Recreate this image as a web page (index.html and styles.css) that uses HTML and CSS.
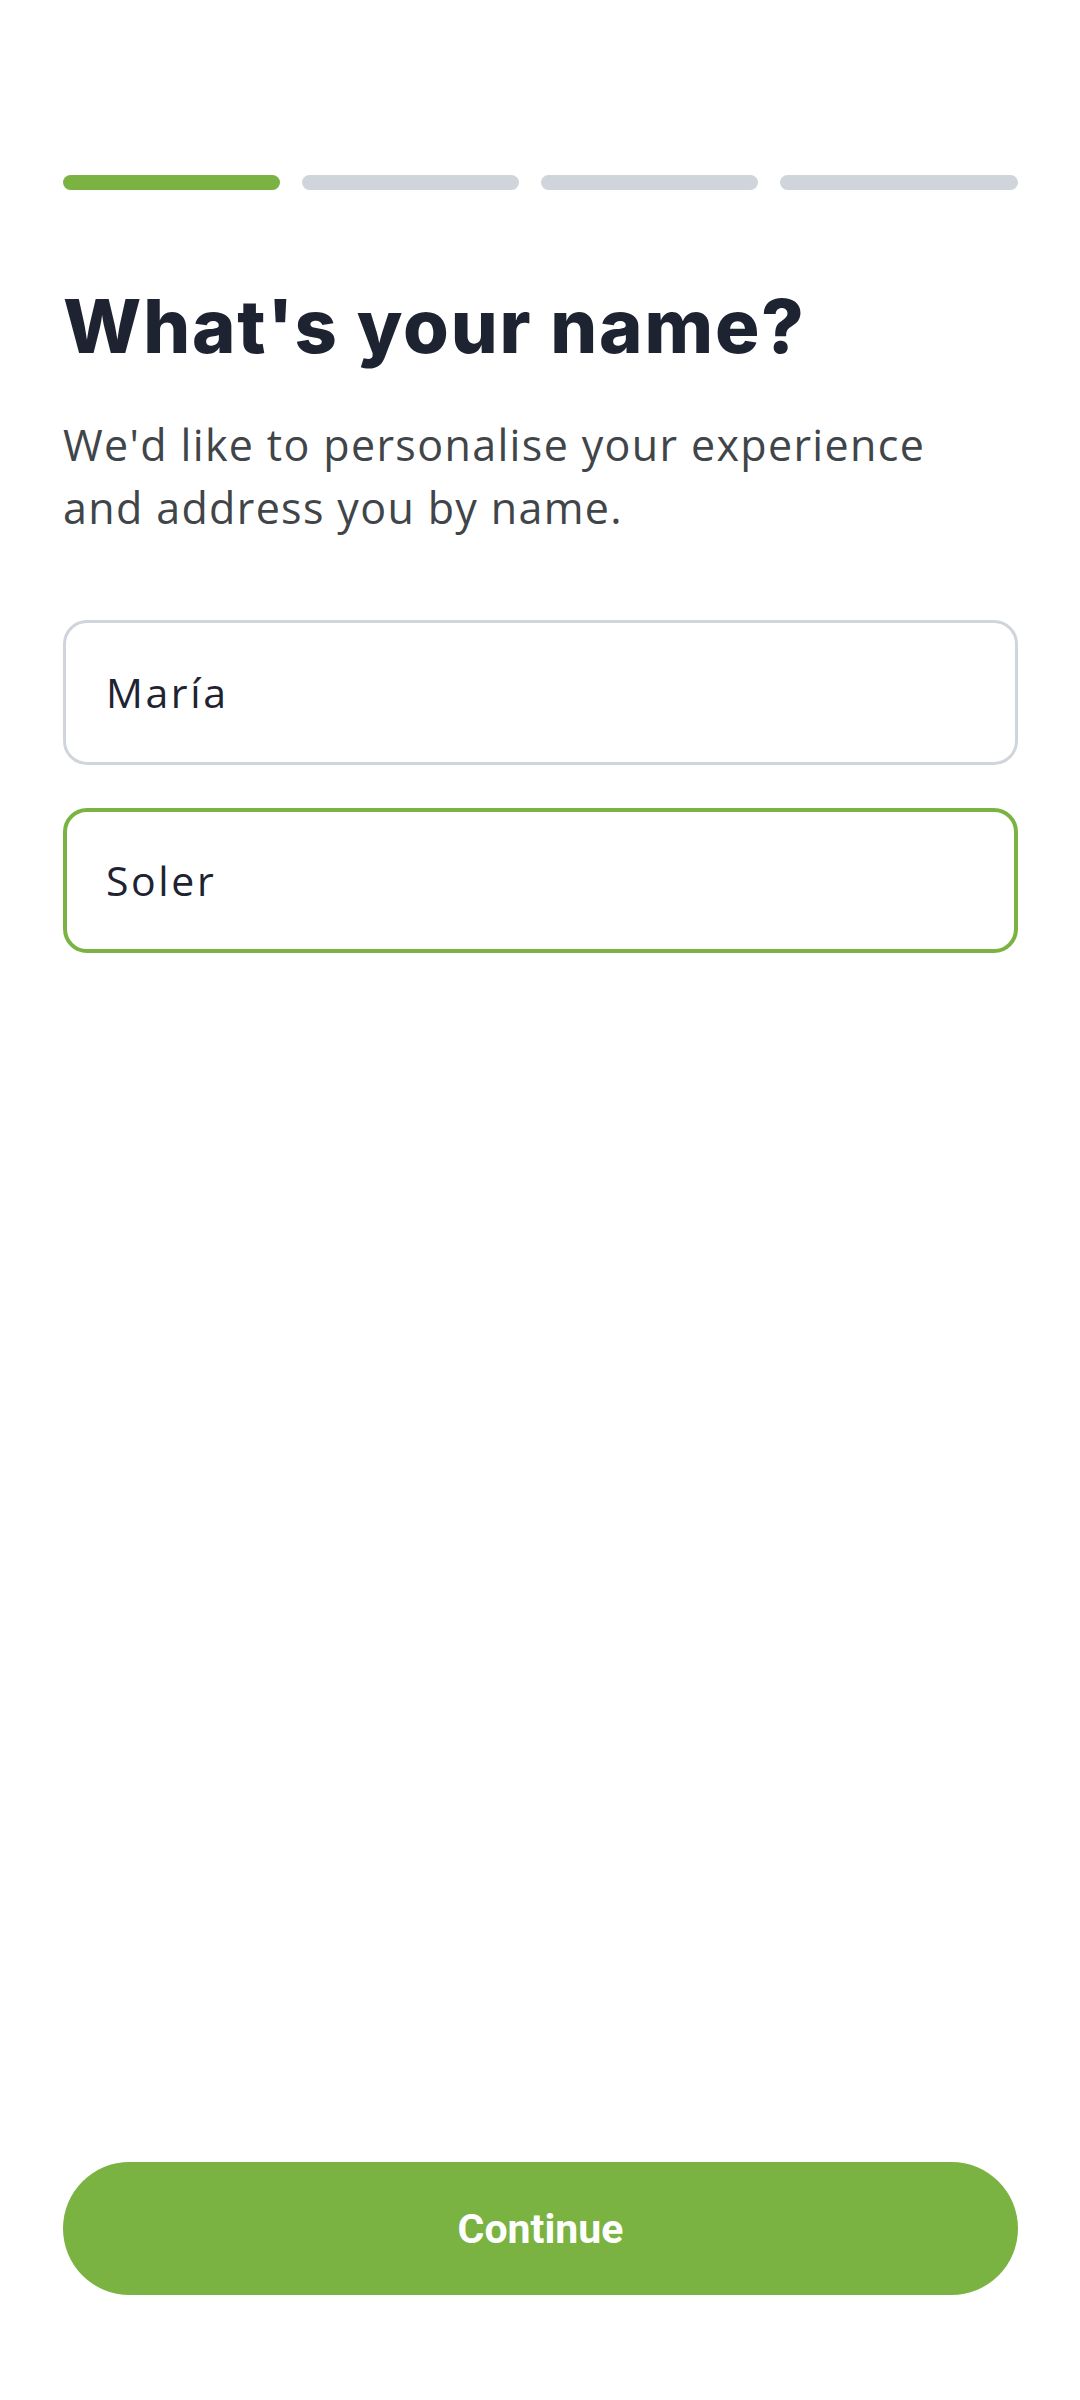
FILE: index.html
```html
<!DOCTYPE html>
<html lang="en">
<head>
<meta charset="utf-8">
<meta name="viewport" content="width=1080">
<title>What's your name?</title>
<link rel="stylesheet" href="styles.css">
</head>
<body>
<main class="screen">
  <div class="progress">
    <span class="step active"></span>
    <span class="step"></span>
    <span class="step"></span>
    <span class="step"></span>
  </div>
  <h1 class="title">What's your name?</h1>
  <p class="subtitle">We'd like to personalise your experience and address you by name.</p>
  <form class="fields">
    <div class="field"><span class="value">María</span></div>
    <div class="field focused"><span class="value">Soler</span></div>
  </form>
  <div class="spacer"></div>
  <button class="continue" type="button">Continue</button>
</main>
</body>
</html>
```
FILE: styles.css
```css
html, body {
  margin: 0;
  padding: 0;
  background: #ffffff;
}

.screen {
  box-sizing: border-box;
  min-height: 2400px;
  display: flex;
  flex-direction: column;
  padding: 175px 62px 105px 63px;
  font-family: "Open Sans", "Noto Sans", sans-serif;
}

.progress {
  display: grid;
  grid-template-columns: 217px 217px 217px 1fr;
  gap: 22px;
}

.step {
  height: 15px;
  border-radius: 8px;
  background: #d0d5db;
}

.step.active {
  background: #7ab342;
}

.title {
  margin: 92px 0 0;
  font-family: "Inter", "Open Sans", sans-serif;
  font-weight: 800;
  font-size: 74px;
  line-height: 1.2;
  color: #1e2332;
  letter-spacing: 1.8px;
}

.subtitle {
  margin: 42px 0 0;
  font-size: 43px;
  line-height: 63px;
  letter-spacing: 1.35px;
  color: #3f4548;
  max-width: 900px;
}

.fields {
  display: flex;
  flex-direction: column;
  gap: 43px;
  margin-top: 81px;
}

.field {
  box-sizing: border-box;
  height: 145px;
  border: 3px solid #d0d5db;
  border-radius: 24px;
  display: flex;
  align-items: center;
  padding: 0 40px;
}

.field.focused {
  border: 4px solid #7ab342;
  padding: 0 39px;
}

.value {
  font-size: 41px;
  letter-spacing: 2.6px;
  color: #1e2332;
}

.spacer {
  flex: 1;
}

.continue {
  height: 133px;
  width: 100%;
  border: none;
  border-radius: 67px;
  background: #7ab342;
  color: #ffffff;
  font-family: "Roboto", sans-serif;
  font-weight: 700;
  font-size: 41px;
  cursor: pointer;
}
```
